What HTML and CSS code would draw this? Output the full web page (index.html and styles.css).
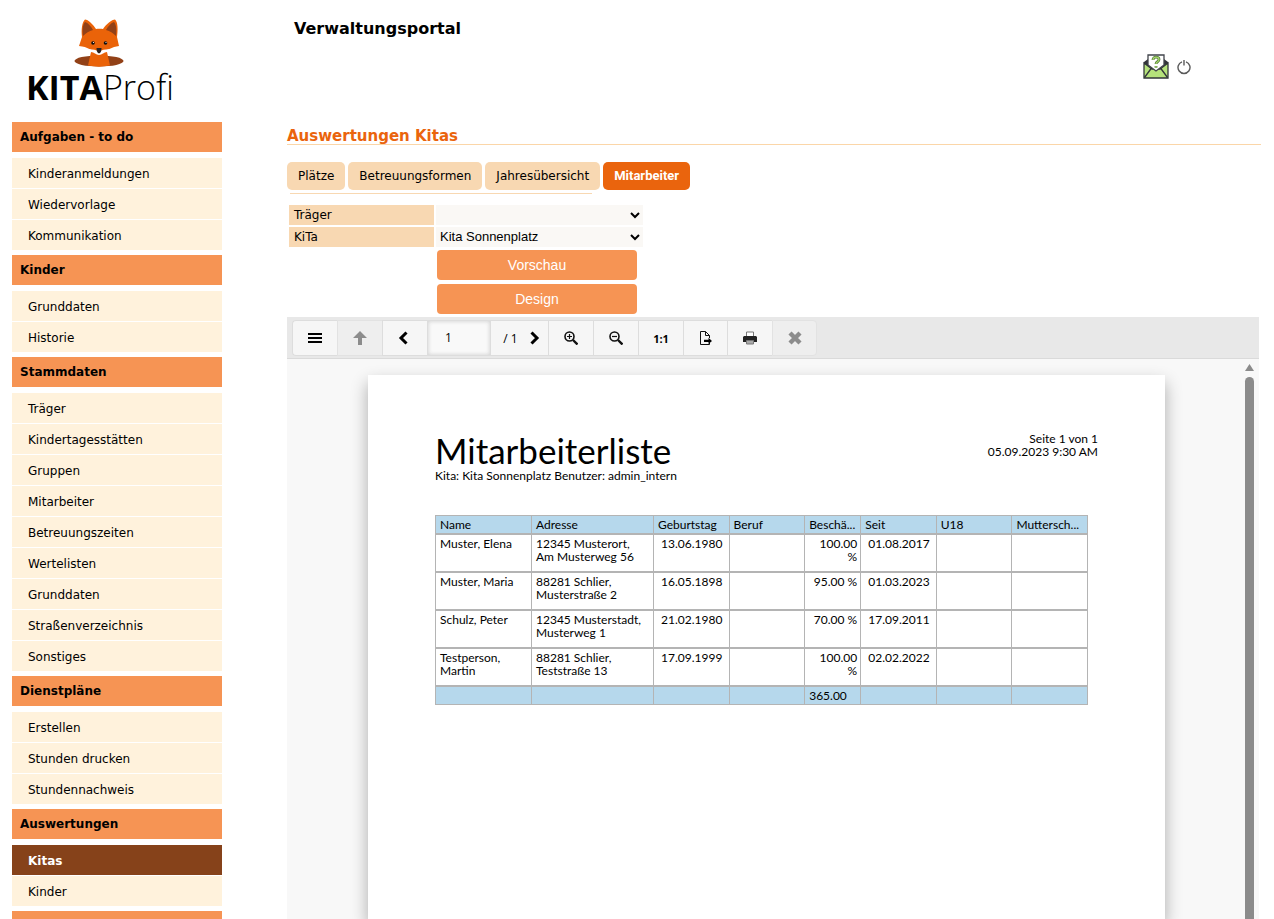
FILE: index.html
```html
<!DOCTYPE html>
<html lang="de">
<head>
<meta charset="utf-8">
<title>KITAProfi Verwaltungsportal</title>
<link rel="stylesheet" href="styles.css">
</head>
<body>
<div class="layout">
  <aside class="sidebar">
    <div class="logo">
      <svg class="fox" viewBox="0 0 50 48" width="50" height="48" aria-hidden="true">
        <ellipse cx="25" cy="42" rx="24.5" ry="5.5" fill="#924117"/>
        <path d="M8 18C7 11 8 3 11 .5c3 0 8 5 11 9.500 2-.5 5-.5 7 0C32 5.500 38 .5 41 .5c3 2.500 3 10.500 2 17.500l2 9c-7 1-12 4-20 8-8-4-11-7-20-8z" fill="#ea6309"/>
        <path d="M9 17C8 10 9 5 11 3c3 1 6 4 8 8-4 1-7 3-10 6zM42 17c1-7 0-12-2-14-3 1-6 4-8 8 4 1 7 3 10 6z" fill="#924117"/>
        <path d="M12 30.500c5-.5 9 0 13 2 4-2 8-2.500 13-2-3 3-8 5-13 6-5-1-10-3-13-6z" fill="#fff"/>
        <path d="M17 33c3 0 5 3 8 3s5-3 8-3l3 13.500c-7 1.500-15 1.500-22 0z" fill="#ea6309"/>
        <path d="M22.500 29h5c0 3-.5 4.500-2.500 5.500-2-1-2.500-2.500-2.500-5.500z" fill="#2b2320"/>
        <circle cx="19" cy="24" r="1.800" fill="#111"/><circle cx="31.500" cy="24" r="1.800" fill="#111"/>
        <circle cx="19.500" cy="23.500" r=".6" fill="#fff"/><circle cx="32" cy="23.500" r=".6" fill="#fff"/>
      </svg>
      <div class="wordmark"><b>KITA</b>Profi</div>
    </div>
    <nav class="menu">
      <h2>Aufgaben - to do</h2>
      <ul><li><a href="#">Kinderanmeldungen</a></li><li><a href="#">Wiedervorlage</a></li><li><a href="#">Kommunikation</a></li></ul>
      <h2>Kinder</h2>
      <ul><li><a href="#">Grunddaten</a></li><li><a href="#">Historie</a></li></ul>
      <h2>Stammdaten</h2>
      <ul><li><a href="#">Träger</a></li><li><a href="#">Kindertagesstätten</a></li><li><a href="#">Gruppen</a></li><li><a href="#">Mitarbeiter</a></li><li><a href="#">Betreuungszeiten</a></li><li><a href="#">Wertelisten</a></li><li><a href="#">Grunddaten</a></li><li><a href="#">Straßenverzeichnis</a></li><li><a href="#">Sonstiges</a></li></ul>
      <h2>Dienstpläne</h2>
      <ul><li><a href="#">Erstellen</a></li><li><a href="#">Stunden drucken</a></li><li><a href="#">Stundennachweis</a></li></ul>
      <h2>Auswertungen</h2>
      <ul><li><a href="#" class="current">Kitas</a></li><li><a href="#">Kinder</a></li></ul>
      <h2></h2>
    </nav>
  </aside>
  <main class="main">
    <header class="top">
      <div class="portal">Verwaltungsportal</div>
      <div class="actions">
        <a href="#" aria-label="Hilfe"><svg width="26" height="25" viewBox="0 0 26 25"><path d="M1 8l4-3h16l4 3v5H1z" fill="#32333a"/><path d="M1 9l8 6h8l8-6v15H1z" fill="#b5e27b" stroke="#32363a" stroke-width="1.300"/><path d="M5 1h16v10l-8 6-8-6z" fill="#fff" stroke="#42454c" stroke-width="1.300"/><path d="M1.500 23.500L8.500 14M24.500 23.500L17.500 14" stroke="#32363a" stroke-width="1.300"/><path d="M10 6c0-4 6-3.500 6-.5 0 2.500-3 2-3 4.500M13 12v1.800" fill="none" stroke="#557a3c" stroke-width="2.800"/><path d="M10 6c0-4 6-3.500 6-.5 0 2.500-3 2-3 4.500M13 12v1.800" fill="none" stroke="#a5d86b" stroke-width="1.300"/></svg></a>
        <a href="#" aria-label="Abmelden"><svg width="14" height="16" viewBox="0 0 14 16"><path d="M5 2.800a6 6 0 1 0 4 0M7 1v5.500" fill="none" stroke="#5a5a5a" stroke-width="1.400"/></svg></a>
      </div>
    </header>
    <h1 class="title">Auswertungen Kitas</h1>
    <nav class="tabs"><a href="#">Plätze</a><a href="#">Betreuungsformen</a><a href="#">Jahresübersicht</a><a href="#" class="active">Mitarbeiter</a></nav>
    <div class="rule"></div>
    <form class="filter">
      <label for="traeger">Träger</label><select id="traeger"><option></option></select>
      <label for="kita">KiTa</label><select id="kita"><option>Kita Sonnenplatz</option></select>
      <button type="button">Vorschau</button>
      <button type="button">Design</button>
    </form>
    <section class="viewer">
      <div class="toolbar">
        <button type="button" aria-label="Menü"><svg width="14" height="12"><path d="M0 2h14M0 6h14M0 10h14" stroke="#000" stroke-width="2"/></svg></button>
        <button type="button" class="off" aria-label="Nach oben" disabled><svg width="14" height="14"><path d="M7 0l7 7H9v7H5V7H0z" fill="#8c8c8c"/></svg></button>
        <button type="button" class="prev" aria-label="Zurück"><svg width="10" height="14"><path d="M8.500 1.500L3 7l5.500 5.500" fill="none" stroke="#000" stroke-width="3"/></svg></button>
        <input type="text" value="1" aria-label="Seite">
        <button type="button" class="next" aria-label="Weiter"><span>/ 1</span><svg width="10" height="14"><path d="M1.500 1.500L7 7l-5.500 5.500" fill="none" stroke="#000" stroke-width="3"/></svg></button>
        <button type="button" aria-label="Vergrößern"><svg width="14" height="14"><circle cx="5.500" cy="5.500" r="4.500" fill="none" stroke="#111" stroke-width="1.600"/><path d="M3 5.500h5M5.500 3v5" stroke="#111" stroke-width="1.200"/><path d="M9 9l4.500 4.500" stroke="#111" stroke-width="2.400"/></svg></button>
        <button type="button" aria-label="Verkleinern"><svg width="14" height="14"><circle cx="5.500" cy="5.500" r="4.500" fill="none" stroke="#111" stroke-width="1.600"/><path d="M3 5.500h5" stroke="#111" stroke-width="1.200"/><path d="M9 9l4.500 4.500" stroke="#111" stroke-width="2.400"/></svg></button>
        <button type="button" class="ratio">1:1</button>
        <button type="button" class="narrow" aria-label="Exportieren"><svg width="14" height="14"><path d="M10.500 7V4.500L6.500.5H1.500v13h9v-1.500M6.500.5V4.500h4" fill="none" stroke="#111" stroke-width="1"/><path d="M5 8.800h4.500V6.800L13 10l-3.500 3v-2H5z" fill="#000"/></svg></button>
        <button type="button" aria-label="Drucken"><svg width="14" height="14"><path d="M3.500 5V1h7v4" fill="#fff" stroke="#777"/><path d="M1 5h12l1 1v5H0V6z" fill="#222"/><path d="M3.500 9.500h7v3.500h-7z" fill="#aaa" stroke="#777"/></svg></button>
        <button type="button" class="off" aria-label="Schließen" disabled><svg width="14" height="14"><path d="M2 2l10 10M12 2L2 12" stroke="#8c8c8c" stroke-width="4.400"/></svg></button>
      </div>
      <div class="canvas">
        <article class="paper">
          <div class="report-head">
            <div><h2>Mitarbeiterliste</h2><p>Kita: Kita Sonnenplatz Benutzer: admin_intern</p></div>
            <p class="stamp">Seite 1 von 1<br>05.09.2023 9:30 AM</p>
          </div>
          <table class="report">
            <colgroup><col class="c-name"><col class="c-addr"><col><col><col class="c-pct"><col><col><col></colgroup>
            <thead><tr><th>Name</th><th>Adresse</th><th>Geburtstag</th><th>Beruf</th><th>Beschä...</th><th>Seit</th><th>U18</th><th>Muttersch...</th></tr></thead>
            <tbody>
            <tr><td>Muster, Elena</td><td>12345 Musterort,<br>Am Musterweg 56</td><td class="date">13.06.1980</td><td></td><td class="pct">100.00<br>%</td><td class="date">01.08.2017</td><td></td><td></td></tr>
            <tr><td>Muster, Maria</td><td>88281 Schlier,<br>Musterstraße 2</td><td class="date">16.05.1898</td><td></td><td class="pct">95.00 %</td><td class="date">01.03.2023</td><td></td><td></td></tr>
            <tr><td>Schulz, Peter</td><td>12345 Musterstadt,<br>Musterweg 1</td><td class="date">21.02.1980</td><td></td><td class="pct">70.00 %</td><td class="date">17.09.2011</td><td></td><td></td></tr>
            <tr><td>Testperson,<br>Martin</td><td>88281 Schlier,<br>Teststraße 13</td><td class="date">17.09.1999</td><td></td><td class="pct">100.00<br>%</td><td class="date">02.02.2022</td><td></td><td></td></tr>
            </tbody>
            <tfoot><tr><td></td><td></td><td></td><td></td><td>365.00</td><td></td><td></td><td></td></tr></tfoot>
          </table>
        </article>
        <div class="scroll"><svg width="9" height="7"><path d="M4.500 0L9 7H0z" fill="#8b8b8b"/></svg><div class="thumb"></div></div>
      </div>
    </section>
  </main>
</div>
</body>
</html>
```
FILE: styles.css
```css
* { box-sizing: border-box; }
body { margin: 0; background: #fff; color: #000; font: 12px "DejaVu Sans", sans-serif; overflow: hidden; }
h1, h2, p, ul { margin: 0; padding: 0; }
a { color: inherit; text-decoration: none; }
svg { display: block; }
.layout { display: grid; grid-template-columns: 210px 1fr; gap: 65px; height: 100vh; padding: 0 13px 0 12px; }
.sidebar { min-height: 0; }
.logo { height: 122px; padding: 19px 0 0 14px; }
.fox { margin-left: 48px; }
.wordmark { font: 300 34px/40px "Open Sans", sans-serif; white-space: nowrap; }
.wordmark b { font-weight: 700; }
.menu h2 { height: 30px; padding-left: 8px; background: #f69454; font-size: 12px; line-height: 30px; margin-bottom: 6px; }
.menu ul { list-style: none; display: grid; gap: 1px; margin-bottom: 5px; }
.menu li a { display: block; height: 30px; padding-left: 16px; line-height: 32px; background: #fff2dc; }
.menu li .current { background: #86421a; color: #fff; font-weight: bold; }

.main { display: flex; flex-direction: column; min-width: 0; min-height: 0; }
.top { display: flex; justify-content: space-between; height: 126px; padding: 18px 70px 0 7px; flex: none; }
.portal { font-size: 16px; font-weight: bold; line-height: 22px; }
.actions { display: flex; align-items: center; gap: 8px; height: 25px; margin-top: 36px; }
.title { color: #ea640d; font-size: 15px; line-height: 18px; padding-top: 1px; height: 19px; border-bottom: 1px solid #fbd6a8; }
.tabs { display: flex; gap: 3px; margin-top: 17px; }
.tabs a { height: 28px; padding: 0 11px; border-radius: 5px; background: #f8d8b2; line-height: 28px; white-space: nowrap; }
.tabs .active { background: #ea640d; color: #fff; font-family: Roboto, sans-serif; font-size: 13px; font-weight: bold; }
.rule { width: 302px; height: 2px; margin: 3px 0 0 3px; border-top: 1px solid #f8d8b2; flex: none; }
.filter { display: grid; grid-template-columns: 145px 207px; column-gap: 2px; row-gap: 2px; padding: 10px 0 2px 2px; }
.filter label { background: #f8d8b2; line-height: 20px; padding-left: 5px; }
.filter select { height: 20px; border: 0; background: #faf8f5; color: #000; font: 13px "Liberation Sans", Arial, sans-serif; padding: 0 0 2px; }
.filter button { grid-column: 2; width: 200px; height: 30px; margin: 1px; border: 0; border-radius: 4px; background: #f69454; color: #fff; font: 14px "Liberation Sans", Arial, sans-serif; }

.viewer { flex: 1; min-height: 0; display: flex; flex-direction: column; margin-right: 2px; background: #f8f8f8; }
.toolbar { display: flex; flex: none; height: 42px; padding: 3px 5px; background: #e8e8e8; border-bottom: 1px solid #dadada; }
.toolbar button { display: flex; align-items: center; justify-content: center; width: 45px; height: 36px; padding: 0; border: 1px solid #ddd; border-right-width: 0; background: #f6f6f6; color: #000; font: 12px "Open Sans", sans-serif; }
.toolbar button:first-child { border-radius: 4px 0 0 4px; }
.toolbar button:last-child { border-radius: 0 4px 4px 0; border-right-width: 1px; }
.toolbar .off { background: #eee; border-color: #e2e2e2; }
.toolbar .prev { padding-right: 4px; }
.toolbar .next { width: 58px; gap: 12px; padding-left: 4px; }
.toolbar .narrow { width: 44px; }
.toolbar .ratio { font-weight: bold; font-size: 11px; }
.toolbar input { width: 63px; height: 36px; padding: 0 0 2px 17px; border: 1px solid #ddd; border-right-width: 0; background: #f9f9f9; box-shadow: inset 0 0 4px #ccc; font: 12px "Open Sans", sans-serif; }
.canvas { flex: 1; min-height: 0; display: flex; padding-left: 81px; overflow: hidden; }
.paper { flex: 1; margin-top: 16px; padding: 57px 67px; background: #fff; box-shadow: 0 8px 16px #00000050; font: 12px/13px Lato, sans-serif; }
.report-head { display: flex; justify-content: space-between; height: 83px; }
.report-head h2 { font-size: 35px; font-weight: 400; line-height: 37px; }
.stamp { text-align: right; }
.report { width: 653px; table-layout: fixed; border-collapse: separate; border-spacing: 0; }
.report .c-name { width: 97px; }
.report .c-addr { width: 122px; }
.report .c-pct { width: 56px; }
.report th, .report td { height: 38px; padding: 2px 3px 0 4px; border: 1px solid #b4b4b4; border-left: 0; font-weight: 400; text-align: left; vertical-align: top; white-space: nowrap; }
.report tr > :first-child { border-left: 1px solid #b4b4b4; }
.report th, .report tfoot td { height: 19px; background: #b6d8ec; }
.report .date { text-align: center; }
.report .pct { text-align: right; }
.scroll { display: flex; flex-direction: column; align-items: center; gap: 6px; width: 15px; margin: 5px 2px 0 77px; }
.thumb { width: 9px; flex: 1; background: #8b8b8b; border-radius: 5px 5px 0 0; }
```
